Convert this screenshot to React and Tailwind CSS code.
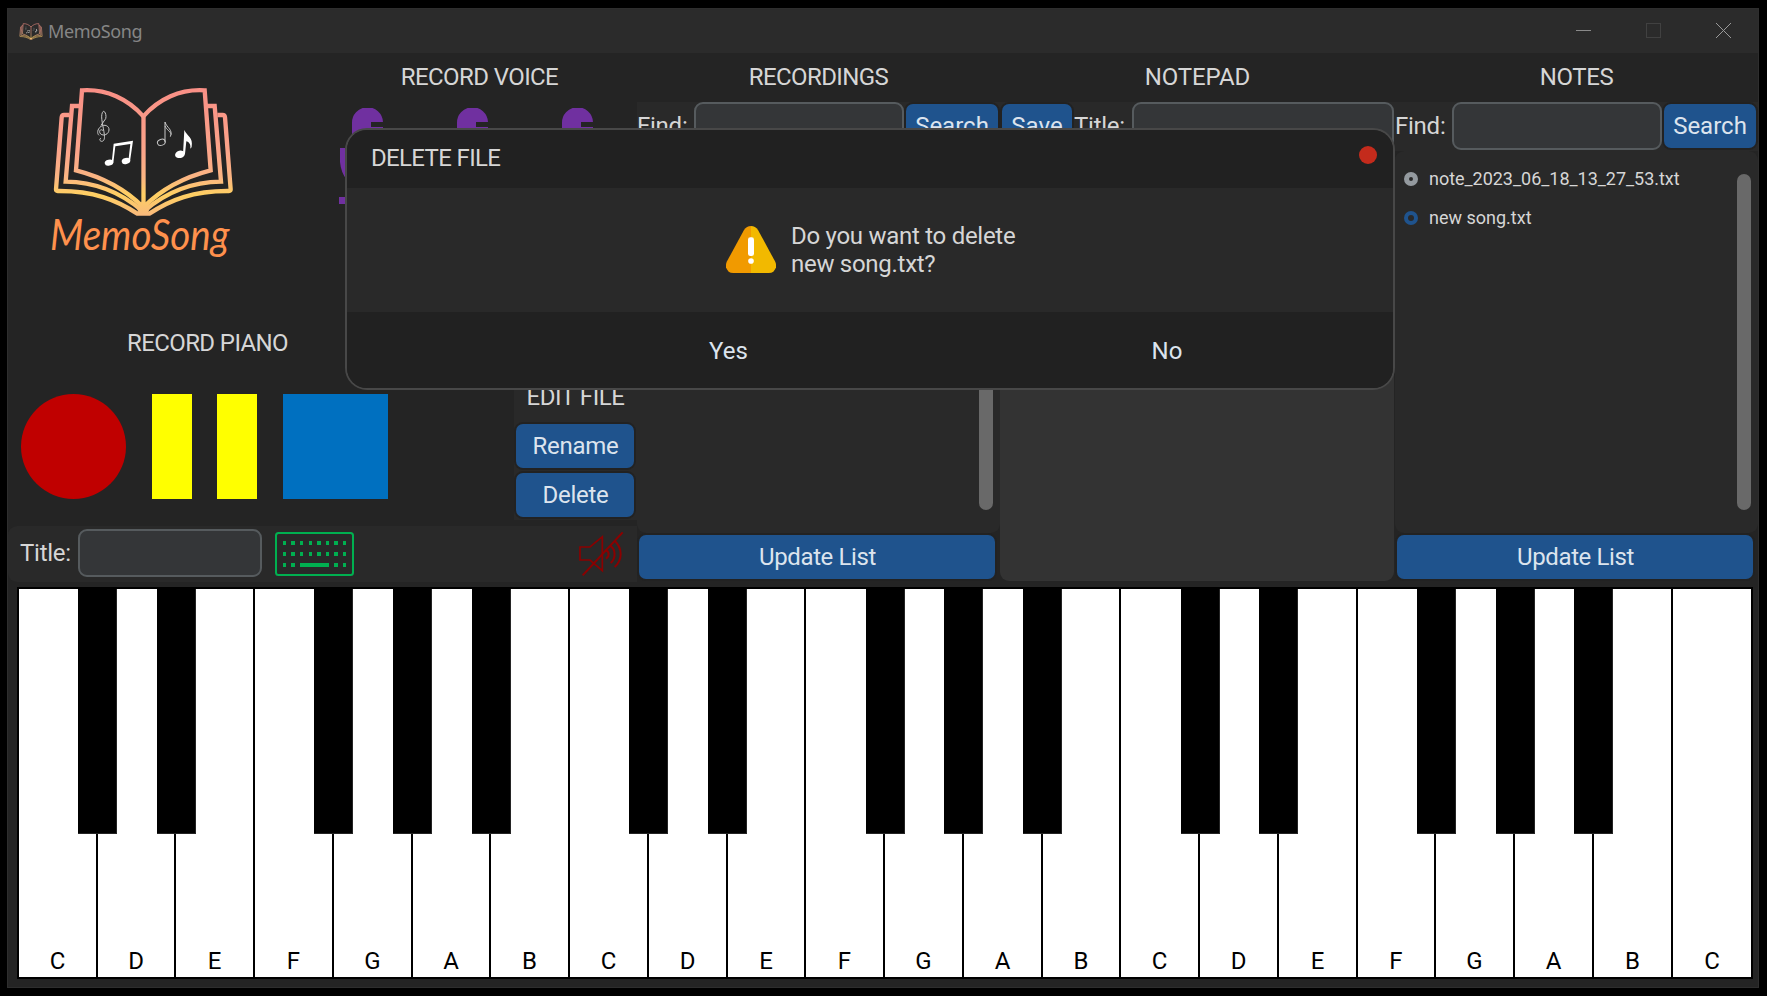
const WHITE = ["C", "D", "E", "F", "G", "A", "B", "C", "D", "E", "F", "G", "A", "B", "C", "D", "E", "F", "G", "A", "B", "C"];
const edge = (i) => (i === 22 ? 1734 : Math.max(0, Math.ceil(78.75 * i - 0.5)));
const BLACK = [61, 140, 297, 376, 455, 612, 691, 849, 927, 1006, 1164, 1242, 1400, 1479, 1557];

function Book({ className, viewBox, children }) {
  return (
    <svg className={className} viewBox={viewBox} fill="none">
      <defs>
        <linearGradient id="page" gradientUnits="userSpaceOnUse" x1="0" y1="265" x2="0" y2="646">
          <stop offset="0" stopColor="#f98f86" />
          <stop offset="0.5" stopColor="#fba58a" />
          <stop offset="0.7" stopColor="#fbb583" />
          <stop offset="0.84" stopColor="#ffd062" />
          <stop offset="1" stopColor="#f8b97c" />
        </linearGradient>
      </defs>
      <g stroke="url(#page)" strokeWidth="13">
        <path d="M430 349C384 298 320 266 246 271L228 511C310 532 380 572 428 620" />
        <path d="M430 349C476 298 540 266 614 271L632 511C550 532 480 572 432 620" />
        <path d="M240 318H216L197 545C290 546 365 580 426 632" />
        <path d="M620 318H644L663 545C570 546 495 580 434 632" />
        <path d="M208 345H192Q186 345 185 352L168 568Q168 573 173 573C280 572 350 600 412 641H448C510 600 580 572 687 573Q692 573 692 568L675 352Q674 345 668 345H652" />
        <path d="M430.5 345V630" />
      </g>
      <path d="M410 622L430 600L450 622L444 640H416Z" fill="url(#page)" />
      <g stroke="#c8c8c8" strokeWidth="3">
        <path d="M309 392c-8-8-14 3-7 10c9 7 24 1 25-12c1-13-14-18-24-11c-12 9-12 22-6 27M303 376l14-20c4-12-5-30-10-18c-6 14 3 40 6 66c2 14-2 20-8 20c-6 0-8-8-2-9" />
        <path d="M495 427V366C500 384 520 388 511 410M495 378C500 390 514 396 513 404" />
        <ellipse cx="484" cy="427" rx="12" ry="9" transform="rotate(-20 484 427)" />
      </g>
      <g fill="#fff">
        <ellipse cx="327" cy="488" rx="13" ry="9" transform="rotate(-12 327 488)" />
        <ellipse cx="378" cy="483" rx="13" ry="9" transform="rotate(-12 378 483)" />
        <path d="M335 488L341 431L399 422L390 484H385L391 432L346 439L340 488Z" />
        <ellipse cx="540" cy="463" rx="15" ry="11" transform="rotate(-15 540 463)" />
        <path d="M549 462L553 390C562 410 580 412 575 440Q573 446 571 445C573 432 566 426 559 424L555 462Z" />
      </g>
      {children}
    </svg>
  );
}

function Heading({ className = "tracking-[-0.6px]", children }) {
  return <h2 className={`flex h-[49px] shrink-0 items-center justify-center pb-0.5 text-[24px] leading-[30px] ${className}`}>{children}</h2>;
}

function Btn({ className, children }) {
  return (
    <button className={`flex h-11 shrink-0 items-center justify-center rounded-[7px] bg-[#1f538d] text-[24px] leading-[30px] text-[#dce4ee] ring-2 ring-[#222222] ${className}`}>
      {children}
    </button>
  );
}

function Entry({ className }) {
  return <div className={`h-12 shrink-0 rounded-[9px] border-2 border-[#565b5e] bg-[#343638] ${className}`} />;
}

function Mics() {
  return (
    <svg className="mt-[6px] h-[110px] w-[315px]" viewBox="322 108 315 110" fill="#7030a0">
      {[0, 105, 210].map((dx) => (
        <g key={dx} transform={`translate(${dx} 0)`}>
          <path d="M352 123.500A15.500 15.500 0 0 1 383 122H371V127H383V165Q367 190 352 165Z" />
          <path d="M340 148h5v12q6 25 22 26t23-26v-12h5v14q-3 22-25 28v7h25v7H339v-7h25v-7q-22-6-24-28z" />
        </g>
      ))}
    </svg>
  );
}

function KeyboardIcon() {
  const dots = [[283, 3], [291, 4], [300, 3], [309, 3], [317, 4], [326, 3], [334, 4], [343, 3]];
  return (
    <svg className="ml-[13px] h-11 w-[79px]" viewBox="275 532 79 44" fill="#00b050">
      <rect x="276" y="533" width="77" height="42" rx="2.500" fill="none" stroke="#00b050" strokeWidth="2" />
      {[541, 552].map((y) => dots.map(([x, w]) => <rect key={`${x}-${y}`} x={x} y={y} width={w} height="4" />))}
      <rect x="283" y="563" width="3" height="4" />
      <rect x="291" y="563" width="4" height="4" />
      <rect x="300" y="563" width="29" height="4" />
      <rect x="334" y="563" width="4" height="4" />
      <rect x="343" y="563" width="3" height="4" />
    </svg>
  );
}

function MuteIcon() {
  return (
    <svg className="mr-[13px] ml-auto h-[44px] w-[45px]" viewBox="719 696 135 132" fill="none" stroke="#8b0000" strokeWidth="5">
      <path d="M722 741H752L789 710V812L752 780H722Z" />
      <path d="M730 826L850 697" strokeWidth="6" />
      <path d="M796 752C810 750 812 768 800 776M812 737C830 748 830 776 814 789M826 722C850 745 850 780 826 801" strokeWidth="6" />
    </svg>
  );
}

function FileList({ children }) {
  return (
    <div className="flex h-[382px] shrink-0 justify-between rounded-[9px] bg-[#292929] pt-[23px] pr-[7px] pl-[9px]">
      <div>{children}</div>
      <div className="h-[336px] w-[14px] rounded-full bg-[#696969]" />
    </div>
  );
}

function Dialog() {
  return (
    <div className="absolute top-[128px] left-[345px] flex h-[262px] w-[1050px] flex-col overflow-hidden rounded-[22px] border-2 border-[#484848] bg-[#292929] text-[24px]">
      <div className="flex h-[58px] items-start justify-between bg-[#212121] pr-4 pl-6">
        <span className="mt-[13px] leading-[30px] tracking-[-0.65px]">DELETE FILE</span>
        <span className="mt-4 size-[18px] rounded-full bg-[#c42b1c]" />
      </div>
      <div className="flex h-[124px] items-start pl-[379px]">
        <svg className="mt-[38px] h-[47px] w-[50px]" viewBox="0 0 150 141">
          <path d="M75 0Q88 0 96 12L147 106Q156 124 142 137Q137 141 128 141H75Z" fill="#f2b900" />
          <path d="M75 0Q62 0 54 12L3 106Q-6 124 8 137Q13 141 22 141H75Z" fill="#f19a00" />
          <rect x="66" y="34" width="18" height="56" rx="7" fill="#fff" />
          <circle cx="75" cy="105" r="8.500" fill="#fff" />
        </svg>
        <p className="mt-[34px] ml-[15px] leading-[28px] tracking-[-0.28px]">
          Do you want to delete
          <br />
          new song.txt?
        </p>
      </div>
      <div className="flex h-[76px] items-center bg-[#212121] pt-0.5 pl-px text-[#dce4ee]">
        <button className="w-[761px] text-center leading-[30px]">Yes</button>
        <button className="w-[116px] text-center leading-[30px]">No</button>
      </div>
    </div>
  );
}

export default function App() {
  return (
    <div className="relative h-[996px] w-[1767px] overflow-hidden bg-black pt-2 pl-[7px] font-['Roboto',sans-serif] text-[#d6d6d6]">
      <div className="flex h-[980px] w-[1752px] flex-col border border-[#2e2e2e] bg-[#242424]">
        <header className="flex h-11 shrink-0 items-center bg-[#2b2b2b] pl-[11px]">
          <Book className="h-[17px] w-6" viewBox="150 255 560 400" />
          <span className="ml-[5px] font-['Noto_Sans',sans-serif] text-[18px] leading-6 tracking-[-0.38px] text-[#868686]">MemoSong</span>
          <div className="mr-[26px] ml-auto flex gap-[54px]">
            <svg className="size-4" viewBox="0 0 16 16" stroke="#8a8a8a"><path d="M0 7.500H15" /></svg>
            <svg className="size-4" viewBox="0 0 16 16" stroke="#414141" fill="none"><rect x=".5" y=".5" width="14" height="14" /></svg>
            <svg className="size-4" viewBox="0 0 16 16" stroke="#9a9a9a"><path d="M0 0L15 15M15 0L0 15" /></svg>
          </div>
        </header>

        <div className="flex h-[534px] shrink-0">
          <section className="w-[629px]">
            <div className="flex h-[257px]">
              <div className="w-[314px] pt-8 pl-[37px]">
                <Book className="h-[180px] w-[192px] overflow-visible" viewBox="135 255 576 540">
                  <text x="150" y="751" textLength="538" lengthAdjust="spacingAndGlyphs" fontFamily="Lato" fontStyle="italic" fontWeight="400" fontSize="128" fill="#ff914d">MemoSong</text>
                </Book>
              </div>
              <div className="w-[315px]">
                <Heading>RECORD VOICE</Heading>
                <Mics />
              </div>
            </div>
            <div className="flex h-[216px] justify-between">
              <div className="w-[399px]">
                <h2 className="mt-[18px] text-center text-[24px] leading-[30px] tracking-[-0.6px]">RECORD PIANO</h2>
                <div className="mt-9 flex pl-[13px]">
                  <div className="size-[105px] rounded-full bg-[#c00000]" />
                  <div className="ml-[26px] h-[105px] w-10 bg-[#ffff00]" />
                  <div className="ml-[25px] h-[105px] w-10 bg-[#ffff00]" />
                  <div className="ml-[26px] size-[105px] bg-[#0070c0]" />
                </div>
              </div>
              <div className="flex h-[210px] w-[123px] flex-col bg-[#292929] px-0.5 pt-[72px]">
                <h2 className="text-center text-[24px] leading-[30px] tracking-[-0.4px]">EDIT FILE</h2>
                <Btn className="mt-3 w-[118px] pl-px tracking-[-0.25px]">Rename</Btn>
                <Btn className="mt-[5px] w-[118px] pl-px tracking-[-0.25px]">Delete</Btn>
              </div>
            </div>
            <div className="flex h-14 items-center rounded-l-[9px] bg-[#292929] pl-3">
              <span className="w-[58px] pb-0.5 text-[24px] leading-[30px] tracking-[-0.25px]">Title:</span>
              <Entry className="-mt-[2px] w-[184px]" />
              <KeyboardIcon />
              <MuteIcon />
            </div>
          </section>

          <section className="w-[363px]">
            <Heading>RECORDINGS</Heading>
            <div className="flex h-[49px] bg-[#292929]">
              <span className="mt-[9px] w-[57px] text-[24px] leading-[30px] tracking-[-0.25px]">Find:</span>
              <Entry className="w-[210px]" />
              <Btn className="mt-0.5 ml-0.5 w-[92px]">Search</Btn>
            </div>
            <FileList />
            <Btn className="mt-0.5 ml-0.5 w-[356px] pl-px tracking-[-0.4px]">Update List</Btn>
          </section>

          <section className="w-[395px]">
            <Heading className="tracking-[-0.1px]">NOTEPAD</Heading>
            <div className="flex h-[49px] bg-[#292929] pl-0.5">
              <Btn className="mt-0.5 w-[70px]">Save</Btn>
              <span className="mt-[9px] ml-0.5 w-[58px] text-[24px] leading-[30px] tracking-[-0.25px]">Title:</span>
              <Entry className="w-[262px]" />
            </div>
            <div className="h-[430px] w-[394px] rounded-[9px] bg-[#333333]" />
          </section>

          <section className="w-[363px]">
            <Heading className="tracking-[-0.4px]">NOTES</Heading>
            <div className="flex h-[49px] bg-[#292929]">
              <span className="mt-[9px] w-[57px] text-[24px] leading-[30px] tracking-[-0.25px]">Find:</span>
              <Entry className="w-[210px]" />
              <Btn className="mt-0.5 ml-0.5 w-[92px]">Search</Btn>
            </div>
            <FileList>
              <div className="-mt-2 flex h-[25px] items-center gap-[11px] text-[18px] tracking-[-0.03px]">
                <span className="size-[14px] rounded-full border-[5px] border-[#949a9f]" />
                note_2023_06_18_13_27_53.txt
              </div>
              <div className="mt-[14px] flex h-[25px] items-center gap-[11px] text-[18px]">
                <span className="size-[14px] rounded-full border-4 border-[#1f538d]" />
                new song.txt
              </div>
            </FileList>
            <Btn className="mt-0.5 ml-0.5 w-[356px] pl-px tracking-[-0.4px]">Update List</Btn>
          </section>
        </div>

        <div className="relative ml-[9px] flex h-[392px] w-[1736px] border-y-2 border-r-2 border-black">
          {WHITE.map((note, i) => (
            <div key={i} className="flex shrink-0 items-end justify-center border-l-2 border-black bg-white pb-px text-[24px] leading-[30px] text-black" style={{ width: edge(i + 1) - edge(i) }}>
              {note}
            </div>
          ))}
          {BLACK.map((x) => (
            <div key={x} className="absolute top-0 h-[245px] w-[39px] border-r border-b border-[#242424] bg-black" style={{ left: x }} />
          ))}
        </div>
      </div>
      <Dialog />
    </div>
  );
}
